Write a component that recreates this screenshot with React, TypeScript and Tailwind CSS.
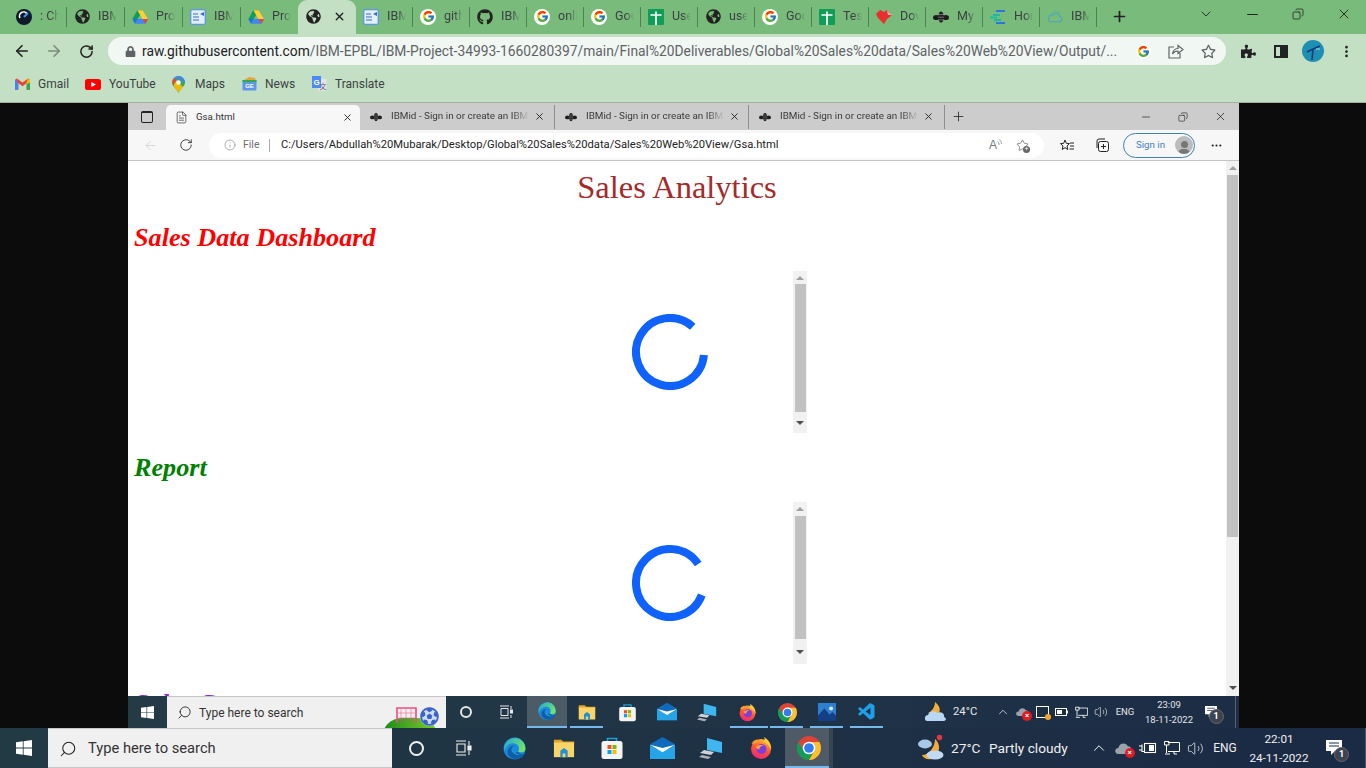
import React from "react";
import { FcGoogle } from "react-icons/fc";
import { FaFutbol, FaGithub, FaGlobeAmericas, FaLock, FaPuzzlePiece, FaRegStar } from "react-icons/fa";
import { VscVscode } from "react-icons/vsc";
import { ArrowLeft, ArrowRight, RotateCw, X, Plus, ChevronDown, Minus, Copy, Info, EllipsisVertical, Ellipsis, ChevronUp, Search, Volume2, FileText, Star } from "lucide-react";

type P = { s?: number };

const Win = ({ s = 18 }: P) => (
  <svg width={s} height={s} viewBox="0 0 16 16" fill="#fff">
    <path d="M0 2.3 6.8 1.3V7.6H0ZM7.6 1.2 16 0V7.6H7.6ZM0 8.4H6.8V14.7L0 13.7ZM7.6 8.4H16V16L7.6 14.8Z" />
  </svg>
);
const Chrome = ({ s = 20 }: P) => (
  <svg width={s} height={s} viewBox="4 4 40 40">
    <circle cx="24" cy="24" r="20" fill="#db4437" />
    <path d="M6.68 14 15.34 29H32.66L24 44A20 20 0 0 1 6.68 14Z" fill="#0f9d58" />
    <path d="M41.32 14H24L32.66 29 24 44A20 20 0 0 0 41.32 14Z" fill="#fbc02d" />
    <circle cx="24" cy="24" r="10.5" fill="#fff" />
    <circle cx="24" cy="24" r="8" fill="#2f7df0" />
  </svg>
);
const Edge = ({ s = 24 }: P) => (
  <svg width={s} height={s} viewBox="0 0 48 48">
    <defs>
      <linearGradient id="eg" x1="0" y1="0" x2="1" y2="0.6"><stop offset="0" stopColor="#1ea8d8" /><stop offset="1" stopColor="#72e26c" /></linearGradient>
    </defs>
    <circle cx="24" cy="24" r="21" fill="#1a8ae0" />
    <path d="M27 3.2A21 21 0 0 1 45 25C45 31 37 33 31 30 35 24 32 15 23 14 15 13 8 18 4 28 3 13 14 3 27 3.2Z" fill="url(#eg)" />
    <path d="M31 30C26 33 17 33 18 25 19 21 22 19 25 19 15 18 9 26 11 34 14 42 24 47 34 43 39 41 43 37 44 32 40 37 35 35 31 30Z" fill="#0f5ea8" />
    <path d="M19 28C21 33 27 37 36 37 30 35 24 33 19 28Z" fill="#33b6e8" />
  </svg>
);
const Folder = ({ s = 22 }: P) => (
  <svg width={s} height={s} viewBox="0 0 24 24">
    <path d="M1 3H9L11 5H23V8H1Z" fill="#e0a526" />
    <path d="M1 6H23V22H1Z" fill="#f8d469" />
    <path d="M8 15 12 12 16 15V22H8Z" fill="#1f8fd8" />
    <path d="M10.5 18H13.5V22H10.5Z" fill="#f8d469" />
  </svg>
);
const Store = ({ s = 24 }: P) => (
  <svg width={s} height={s} viewBox="0 0 24 24">
    <path d="M7.5 6V2.5H16.5V6" fill="none" stroke="#18a0d8" strokeWidth="1.6" />
    <rect x="1.5" y="5" width="21" height="18" rx="2.5" fill="#f4f4f4" />
    <rect x="7.5" y="9" width="4" height="4" fill="#f25022" />
    <rect x="12.5" y="9" width="4" height="4" fill="#7fba00" />
    <rect x="7.5" y="14" width="4" height="4" fill="#00a4ef" />
    <rect x="12.5" y="14" width="4" height="4" fill="#ffb900" />
  </svg>
);
const Mail = ({ s = 24 }: P) => (
  <svg width={s} height={s} viewBox="0 0 24 24">
    <path d="M0 8 12 1 24 8V22H0Z" fill="#0f6cbd" />
    <path d="M0 9 12 15 24 9V22H0Z" fill="#25a5e8" />
    <path d="M0 8.5 12 15.5 24 8.5 12 11.5Z" fill="#fff" />
  </svg>
);
const Device = ({ s = 24 }: P) => (
  <svg width={s} height={s} viewBox="0 0 24 24">
    <path d="M8 2 23 6V17L8 14Z" fill="#3fb6ee" />
    <path d="M5 14 15 16 12 19 1 17Z" fill="#cfd3d6" />
    <path d="M3 19 12 21 9 23 0 21Z" fill="#aeb2b5" />
  </svg>
);
const Firefox = ({ s = 24 }: P) => (
  <svg width={s} height={s} viewBox="0 0 48 48">
    <defs>
      <linearGradient id="ffg" x1="0.7" y1="0" x2="0.3" y2="1"><stop offset="0" stopColor="#ffbd2e" /><stop offset="0.5" stopColor="#ff5634" /><stop offset="1" stopColor="#f0247a" /></linearGradient>
    </defs>
    <circle cx="24" cy="26" r="20" fill="url(#ffg)" />
    <path d="M30 2C40 8 46 18 44 28 42 20 36 14 28 12 32 9 32 6 30 2Z" fill="#ffc83a" />
    <path d="M5 16C8 9 13 7 17 7 15 10 16 12 18 13 13 14 8 16 5 16Z" fill="#ff9a2e" />
    <circle cx="25" cy="26" r="10" fill="#7b3fe0" />
    <path d="M14 22C18 18 24 17 30 19 24 19 20 23 21 27 17 27 15 25 14 22Z" fill="#ffa436" />
  </svg>
);
const Photos = ({ s = 20 }: P) => (
  <svg width={s} height={s} viewBox="0 0 20 20">
    <rect width="20" height="20" fill="#2f7fd0" />
    <circle cx="14.5" cy="6" r="2.2" fill="#d9ecff" />
    <path d="M0 14 7 6 13 13 16 10 20 14V20H0Z" fill="#143f86" />
  </svg>
);
const Drive = ({ s = 16 }: P) => (
  <svg width={s} height={s} viewBox="0 0 24 22">
    <path d="M8 1H16L8.5 14H0.5Z" fill="#0f9d58" />
    <path d="M8 1H16L24 14.5H16Z" fill="#ffcf33" />
    <path d="M4.5 21 8.5 14H24L20 21Z" fill="#4285f4" />
    <path d="M0.5 14H8.5L4.5 21Z" fill="#1a73e8" />
    <path d="M16 14.5H24L20 21Z" fill="#ea4335" />
  </svg>
);
const Docs = ({ s = 16 }: P) => (
  <svg width={s} height={s} viewBox="0 0 16 16">
    <rect x="0.7" y="0.7" width="14.6" height="14.6" rx="1.5" fill="#e4effc" stroke="#5a96e6" strokeWidth="1.3" />
    <path d="M3 5H8M3 8H9M3 11H9" stroke="#2e6fce" strokeWidth="1.2" />
    <path d="M10 5 14 3V7Z" fill="#2e6fce" />
  </svg>
);
const G = () => (
  <span className="w-[16px] h-[16px] rounded-full bg-white flex items-center justify-center"><FcGoogle size={13} /></span>
);
const Sheets = ({ s = 16 }: P) => (
  <svg width={s} height={s} viewBox="0 0 16 16">
    <rect width="16" height="16" rx="1" fill="#0f9d58" />
    <path d="M2.5 6H13.5M8 2.5V16" stroke="#fff" strokeWidth="1.7" />
  </svg>
);
const Heart = ({ s = 16 }: P) => (
  <svg width={s} height={s} viewBox="0 0 16 16">
    <path d="M0 5 4 1 8 3 11 1 13 4 16 6 11 10 8 15 2 9Z" fill="#e8312f" />
    <path d="M11 1 13 4 16 6 12 6Z" fill="#f5b8b8" />
  </svg>
);
const Bee = ({ s = 16 }: P) => (
  <svg width={s} height={s} viewBox="0 0 16 12" fill="#1e1e1e">
    <ellipse cx="8" cy="6" rx="2.8" ry="5.5" />
    <ellipse cx="3.2" cy="6.5" rx="3.2" ry="2.6" />
    <ellipse cx="12.8" cy="6.5" rx="3.2" ry="2.6" />
    <path d="M5 3.5H11M5 6.2H11M5 8.9H11" stroke="#9a9a9a" strokeWidth="0.7" />
  </svg>
);
const Lines = ({ s = 16 }: P) => (
  <svg width={s} height={s} viewBox="0 0 16 14">
    <path d="M6 1H15" stroke="#2d74e0" strokeWidth="2" />
    <path d="M3 5H10" stroke="#1fb6b0" strokeWidth="2" />
    <path d="M0 7.5H7" stroke="#16c0a0" strokeWidth="2" />
    <path d="M4 10H11" stroke="#1fb6b0" strokeWidth="2" />
    <path d="M6 13H15" stroke="#2d74e0" strokeWidth="2" />
  </svg>
);
const Cloud = ({ s = 17 }: P) => (
  <svg width={s} height={s} viewBox="0 0 24 24" fill="none" stroke="#4aa6c4" strokeWidth="1.6">
    <path d="M6 20H18C23 20 24 13 19 12 19 6 11 5 9 10 4 9 2 12 3 15 1 17 3 20 6 20Z" />
    <path d="M7 5 8 7M12 3V5M17 5 16 7M3 9 5 10" stroke="#46b7a8" />
  </svg>
);
const MiniLogo = ({ s = 16 }: P) => (
  <svg width={s} height={s} viewBox="0 0 16 16">
    <circle cx="8" cy="8" r="8" fill="#10182b" />
    <path d="M4 9A4 4 0 0 1 11 5" fill="none" stroke="#fff" strokeWidth="1.6" />
    <path d="M8 8 12 4" stroke="#2e9cf0" strokeWidth="2" />
  </svg>
);
const Gmail = () => (
  <svg width="15" height="12" viewBox="0 0 16 12">
    <path d="M0 1.5V12H3.5V5L8 8.5 12.5 5V12H16V1.5L14 0 8 4.5 2 0Z" fill="#ea4335" />
    <path d="M0 1.5V12H3.5V4Z" fill="#4285f4" />
    <path d="M16 1.5V12H12.5V4Z" fill="#34a853" />
    <path d="M12.5 3.5 14 0 16 1.5V4L12.5 6.2Z" fill="#fbbc04" />
  </svg>
);
const YouTube = () => (
  <svg width="16" height="11" viewBox="0 0 16 11">
    <rect width="16" height="11" rx="2.6" fill="#f00" />
    <path d="M6.3 3 11 5.5 6.3 8Z" fill="#fff" />
  </svg>
);
const Maps = () => (
  <svg width="13" height="17" viewBox="0 0 13 17">
    <path d="M6.5 0A6.5 6.5 0 0 1 13 6.5C13 10 9 12 6.5 17 4 12 0 10 0 6.5A6.5 6.5 0 0 1 6.5 0Z" fill="#34a853" />
    <path d="M2 2 11 11C9.5 13 7.5 14.5 6.5 17 5 14 3.5 12.5 2 11Z" fill="#fbbc04" opacity="0.95" />
    <path d="M6.5 0A6.5 6.5 0 0 1 13 6.5L10 6A3.5 3.5 0 0 0 4 4L2 2A6.5 6.5 0 0 1 6.5 0Z" fill="#4285f4" />
    <path d="M2 2 4.5 4.5 1.5 9A6 6 0 0 1 2 2Z" fill="#ea4335" />
    <circle cx="6.5" cy="6.5" r="2.3" fill="#fff" />
  </svg>
);
const News = () => (
  <svg width="15" height="14" viewBox="0 0 15 14">
    <path d="M2 3 7 0 13 1 14 4H2Z" fill="#e8a33d" />
    <rect x="0.5" y="3" width="14" height="10.5" rx="1" fill="#5c97ea" />
    <path d="M0.5 3H14.5V5H0.5Z" fill="#34a853" />
    <text x="7.5" y="11" fontSize="6" fill="#fff" textAnchor="middle" fontFamily="Liberation Sans" fontWeight="700">GE</text>
  </svg>
);
const Translate = () => (
  <svg width="15" height="16" viewBox="0 0 15 16">
    <path d="M6 3H14.5V15H6Z" fill="#e3e5e8" />
    <path d="M0 0H9V12H0Z" fill="#4c8bf5" />
    <text x="4.5" y="9" fontSize="8" fill="#fff" textAnchor="middle" fontFamily="Liberation Sans" fontWeight="700">G</text>
    <text x="11" y="13" fontSize="7" fill="#5f6368" textAnchor="middle" fontFamily="Noto Sans CJK SC">文</text>
  </svg>
);
const Spinner = ({ d }: { d: string }) => (
  <svg width="76" height="76" viewBox="0 0 76 76" fill="none" className="shrink-0">
    <path d={d} stroke="#0f62fe" strokeWidth="8" />
  </svg>
);
const TriUp = () => <span className="w-0 h-0 border-x-[4px] border-x-transparent border-b-[4px] border-b-[#a0a0a0]" />;
const TriDown = () => <span className="w-0 h-0 border-x-[4px] border-x-transparent border-t-[4px] border-t-[#505050]" />;

const MoonCloud = () => (
  <svg width="26" height="28" viewBox="0 0 26 28">
    <path d="M17 5C23 10 23 20 13 25 9 26 5 24 4 21 11 21 17 13 17 5Z" fill="#f3a93c" />
    <ellipse cx="7" cy="10" rx="7" ry="4.4" fill="#a9c7e6" />
    <ellipse cx="17" cy="21" rx="8.5" ry="4.6" fill="#c3dbf2" />
    <circle cx="21.5" cy="3.5" r="2.7" fill="#e5383b" />
  </svg>
);
const SmallMoonCloud = () => (
  <svg width="22" height="20" viewBox="0 0 22 20">
    <path d="M10 0C14 3 16 7 14 11H3C7 9 10 5 10 0Z" fill="#f0b040" />
    <path d="M2 19C-1 19 -1 13 3 13 4 9 10 8 12 11 16 9 20 12 19 15 22 16 21 19 19 19Z" fill="#b9d6f2" />
  </svg>
);
const OneDrive = ({ s = 18 }: P) => (
  <span className="relative inline-flex">
    <svg width={s} height={s * 0.7} viewBox="0 0 20 14"><path d="M4 14C-1 14-1 7 4 7 5 1 13 0 15 5 19 5 20 8 19 14Z" fill="#9aa3a8" /></svg>
    <span className="absolute right-[-3px] bottom-[-4px] w-[10px] h-[10px] rounded-full bg-[#e01b24] text-white text-[8px] leading-[10px] text-center font-bold">×</span>
  </span>
);
const Battery = () => (
  <svg width="18" height="12" viewBox="0 0 18 12" fill="none" stroke="#fff" strokeWidth="1.1">
    <rect x="5.5" y="1.5" width="11" height="9" />
    <rect x="10" y="3" width="5" height="6" fill="#fff" stroke="none" />
    <path d="M0 4H3M0 8H3M3 2.5V9.5H5.5" />
  </svg>
);
const SmallBattery = () => (
  <svg width="14" height="10" viewBox="0 0 14 10" fill="none" stroke="#fff" strokeWidth="1">
    <rect x="0.5" y="1.5" width="11" height="7" />
    <rect x="2" y="3" width="5" height="4" fill="#fff" stroke="none" />
    <path d="M12.5 3.5V6.5" />
  </svg>
);
const Net = ({ s = 16 }: P) => (
  <svg width={s} height={s} viewBox="0 0 16 16" fill="none" stroke="#fff" strokeWidth="1">
    <path d="M4 2.5H15.5V11.5H4M0.5 1.5H5V5H0.5ZM2.5 5V13M1 14H6M10 11.5V14H13" />
  </svg>
);
const Bubble = ({ s = 16 }: P) => (
  <span className="relative inline-flex">
    <svg width={s} height={s} viewBox="0 0 16 16" fill="#fff"><path d="M0 0H16V11H9L5 15V11H0Z" /><path d="M3 3H13M3 6H13" stroke="#1d2c44" strokeWidth="1" /></svg>
    <span className="absolute right-[-7px] bottom-[-6px] w-[15px] h-[15px] rounded-full bg-[#3d4450] border border-[#666] text-white text-[9px] leading-[13px] text-center font-bold">1</span>
  </span>
);
const ShareIcon = () => (
  <svg width="16" height="16" viewBox="0 0 16 16" fill="none" stroke="#5f6368" strokeWidth="1.2">
    <path d="M6 4H1V15H12V10" />
    <path d="M4.5 11C5 7 8 5.5 10 5.5V2.5L15 6.5 10 10.5V8C8 8 5.8 8.8 4.5 11Z" fill="#f1f7f2" />
  </svg>
);
const Tab = ({ icon, label, className }: { icon: React.ReactNode; label: string; className: string }) => (
  <div className={`h-[20px] flex items-center shrink-0 pl-[7px] border-r border-[#4f8253] ${className}`}>
    <span className="w-[16px] h-[16px] flex items-center justify-center shrink-0">{icon}</span>
    <span className="ml-[8px] w-[19px] overflow-hidden whitespace-nowrap text-[12.5px] text-[#3c4043] [mask-image:linear-gradient(to_right,black_55%,transparent)]">{label}</span>
  </div>
);
const EdgeTab = ({ className }: { className: string }) => (
  <div className={`h-[24px] flex items-center shrink-0 ${className}`}>
    <span className="w-[16px] flex justify-center ml-[8px] shrink-0"><Bee s={12} /></span>
    <span className="ml-[7px] w-[138px] overflow-hidden whitespace-nowrap text-[9.9px] text-[#3a3a3a] [mask-image:linear-gradient(to_right,black_88%,transparent)]">IBMid - Sign in or create an IBMid</span>
    <X size={11} strokeWidth={2} color="#222" className="ml-[5px] shrink-0" />
  </div>
);
const Mark = ({ children, className }: { children: React.ReactNode; className: string }) => (
  <div className={`flex items-center gap-[8px] text-[12px] text-[#3c4043] ${className}`}>{children}</div>
);

export default function App() {
  return (
    <div className="w-[1366px] h-[768px] overflow-hidden flex flex-col font-['Roboto',sans-serif] bg-[#0c0c0c]">
      {/* Outer Chrome tab strip */}
      <div className="h-[34px] bg-[#78bb7b] flex items-start shrink-0">
        <div className="w-[9px] shrink-0" />
        <div className="flex items-center h-[33px]">
          <Tab icon={<MiniLogo />} label=": Chat" className="w-[58px]" />
          <Tab icon={<FaGlobeAmericas size={15} color="#222" />} label="IBM" className="w-[58px]" />
          <Tab icon={<Drive />} label="Project" className="w-[58px]" />
          <Tab icon={<Docs />} label="IBM" className="w-[58px]" />
          <Tab icon={<Drive />} label="Project" className="w-[57px] border-r-0" />
        </div>
        <div className="w-[58px] h-[34px] bg-[#c4e0c4] rounded-t-[9px] flex items-center shrink-0 pl-[8px] pb-[2px]">
          <FaGlobeAmericas size={15} color="#222" />
          <X size={13} strokeWidth={2.6} color="#222" className="ml-[12px]" />
        </div>
        <div className="flex items-center h-[33px]">
          <Tab icon={<Docs />} label="IBM" className="w-[57px]" />
          <Tab icon={<G />} label="github" className="w-[57px]" />
          <Tab icon={<FaGithub size={16} color="#222" />} label="IBM" className="w-[57px]" />
          <Tab icon={<G />} label="online" className="w-[57px]" />
          <Tab icon={<G />} label="Google" className="w-[57px]" />
          <Tab icon={<Sheets />} label="User" className="w-[57px]" />
          <Tab icon={<FaGlobeAmericas size={15} color="#222" />} label="user" className="w-[57px]" />
          <Tab icon={<G />} label="Google" className="w-[57px]" />
          <Tab icon={<Sheets />} label="Test" className="w-[57px]" />
          <Tab icon={<Heart />} label="Down" className="w-[57px]" />
          <Tab icon={<Bee />} label="My" className="w-[57px]" />
          <Tab icon={<Lines />} label="Home" className="w-[57px]" />
          <Tab icon={<Cloud />} label="IBM" className="w-[57px]" />
        </div>
        <div className="w-[45px] h-[33px] flex items-center justify-center shrink-0"><Plus size={17} strokeWidth={2.4} color="#222" /></div>
        <div className="w-[72px] h-[28px] flex items-center justify-end shrink-0"><ChevronDown size={16} strokeWidth={1.3} color="#222" /></div>
        <div className="w-[47px] h-[28px] flex items-center justify-end shrink-0"><Minus size={17} strokeWidth={1.4} color="#222" /></div>
        <div className="w-[43px] h-[28px] flex items-center justify-end shrink-0"><Copy size={12} strokeWidth={1.5} color="#222" className="-scale-x-100" /></div>
        <div className="w-[48px] h-[28px] flex items-center justify-end shrink-0"><X size={16} strokeWidth={1.4} color="#222" /></div>
      </div>

      {/* Outer toolbar */}
      <div className="h-[34px] bg-[#c4e0c4] flex items-center shrink-0">
        <div className="w-[44px] flex justify-center shrink-0"><ArrowLeft size={18} strokeWidth={2.2} color="#222" /></div>
        <div className="w-[20px] flex justify-center shrink-0"><ArrowRight size={18} strokeWidth={2.2} color="#7c8a7e" /></div>
        <div className="w-[44px] flex justify-center shrink-0"><RotateCw size={15} strokeWidth={2.4} color="#222" /></div>
        <div className="w-[1118px] h-[28px] rounded-full bg-[#f1f7f2] flex items-center shrink-0">
          <div className="w-[34px] flex justify-end pr-[6px] shrink-0"><FaLock size={11} color="#5f6368" /></div>
          <div className="w-[977px] shrink-0 whitespace-nowrap overflow-hidden text-[13.8px] text-[#5f6368]"><span className="text-[#202124]">raw.githubusercontent.com</span>/IBM-EPBL/IBM-Project-34993-1660280397/main/Final%20Deliverables/Global%20Sales%20data/Sales%20Web%20View/Output/...</div>
          <div className="w-[32px] flex justify-end shrink-0"><span className="w-[15px] h-[15px] rounded-full bg-white flex items-center justify-center"><FcGoogle size={13} /></span></div>
          <div className="w-[33px] flex justify-end shrink-0"><ShareIcon /></div>
          <div className="w-[32px] flex justify-end shrink-0"><FaRegStar size={15} color="#5f6368" /></div>
        </div>
        <div className="w-[30px] flex justify-end shrink-0"><FaPuzzlePiece size={15} color="#222" /></div>
        <div className="w-[32px] flex justify-end shrink-0">
          <span className="w-[14px] h-[13px] border-2 border-[#222] flex justify-end"><span className="w-[6px] bg-[#222]" /></span>
        </div>
        <div className="w-[36px] flex justify-end shrink-0">
          <svg width="22" height="22" viewBox="0 0 22 22">
            <circle cx="11" cy="11" r="11" fill="#1c8fb2" />
            <path d="M11 9 5 12M11 9 18 6M11 9 10 20" stroke="#123a78" strokeWidth="1.6" />
            <path d="M14 9H18" stroke="#a8d8e8" strokeWidth="1" />
          </svg>
        </div>
        <div className="w-[44px] flex justify-center shrink-0"><EllipsisVertical size={15} strokeWidth={2.4} color="#222" /></div>
      </div>

      {/* Bookmarks */}
      <div className="h-[35px] bg-[#c4e0c4] border-b border-[#9fb1a0] flex items-center shrink-0 pl-[15px] pb-[2px]">
        <Mark className="w-[70px]"><Gmail /><span>Gmail</span></Mark>
        <Mark className="w-[87px]"><YouTube /><span>YouTube</span></Mark>
        <Mark className="w-[70px]"><Maps /><span className="ml-[2px]">Maps</span></Mark>
        <Mark className="w-[70px]"><News /><span>News</span></Mark>
        <Mark className="w-[80px]"><Translate /><span>Translate</span></Mark>
      </div>

      {/* Black desktop holding the inner window */}
      <div className="h-[625px] shrink-0 bg-[#0c0c0c] pl-[128px] flex">
        <div className="w-[1111px] flex flex-col">
          {/* Edge tab strip */}
          <div className="h-[27px] bg-[#cccccc] flex items-end shrink-0">
            <div className="w-[38px] h-[27px] flex items-center justify-center shrink-0">
              <span className="w-[12px] h-[12px] border border-[#222] border-t-2 rounded-[2px]" />
            </div>
            <div className="w-[194px] h-[25px] bg-[#f7f7f7] rounded-t-[5px] flex items-center shrink-0">
              <span className="w-[16px] ml-[7px] flex justify-center shrink-0"><FileText size={13} strokeWidth={1.2} color="#222" /></span>
              <span className="ml-[7px] w-[146px] text-[9.7px] text-[#333]">Gsa.html</span>
              <X size={11} strokeWidth={2} color="#222" />
            </div>
            <div className="flex items-center h-[27px]">
              <EdgeTab className="w-[195px] border-r border-[#8e8e8e] h-[17px]" />
              <EdgeTab className="w-[194px] border-r border-[#8e8e8e] h-[17px]" />
              <EdgeTab className="w-[196px] border-r border-[#8e8e8e] h-[17px]" />
              <div className="w-[27px] flex justify-center"><Plus size={15} strokeWidth={1.3} color="#222" /></div>
            </div>
            <div className="w-[180px] h-[27px] flex items-center justify-end shrink-0"><Minus size={12} strokeWidth={1.4} color="#222" /></div>
            <div className="w-[36px] h-[27px] flex items-center justify-end shrink-0"><Copy size={10} strokeWidth={1.5} color="#222" className="-scale-x-100" /></div>
            <div className="w-[39px] h-[27px] flex items-center justify-end shrink-0"><X size={13} strokeWidth={1.4} color="#222" /></div>
          </div>

          {/* Edge toolbar */}
          <div className="h-[31px] bg-[#f7f7f7] border-b border-[#c4c4c4] flex items-center shrink-0">
            <div className="w-[44px] flex justify-center shrink-0"><ArrowLeft size={15} strokeWidth={1.1} color="#c8c8c8" /></div>
            <div className="w-[28px] flex justify-center shrink-0"><RotateCw size={14} strokeWidth={1.4} color="#222" /></div>
            <div className="ml-[9px] w-[835px] h-[25px] bg-white rounded-full flex items-center shrink-0">
              <div className="ml-[15px] w-[12px] shrink-0"><Info size={12} strokeWidth={1.1} color="#6f6f6f" /></div>
              <span className="ml-[7px] text-[10.5px] text-[#6f6f6f] w-[21px]">File</span>
              <span className="w-px h-[13px] bg-[#aaa] ml-[5px]" />
              <span className="ml-[11px] w-[644px] shrink-0 whitespace-nowrap text-[11.2px] text-[#222]">C:/Users/Abdullah%20Mubarak/Desktop/Global%20Sales%20data/Sales%20Web%20View/Gsa.html</span>
              <span className="w-[77px] flex justify-end items-center shrink-0">
                <span className="text-[12px] text-[#777] font-['Liberation_Sans']">A</span>
                <svg width="5" height="8" viewBox="0 0 5 8" fill="none" stroke="#888" strokeWidth="0.8" className="mb-[4px]"><path d="M0.5 2.5A3 3 0 0 1 2 6M2.5 0.5A6 6 0 0 1 4.5 5" /></svg>
              </span>
              <span className="w-[28px] flex justify-end shrink-0 relative">
                <Star size={13} strokeWidth={1.1} color="#444" className="mr-[1px]" />
                <span className="absolute right-[0px] bottom-[-1px] w-[7px] h-[7px] rounded-full bg-[#666] text-white text-[7px] leading-[6px] text-center">+</span>
              </span>
            </div>
            <div className="w-[30px] flex justify-end shrink-0">
              <svg width="14" height="13" viewBox="0 0 14 13" fill="none" stroke="#222" strokeWidth="1"><path d="M5 1 6.3 4.3 9.5 4.6 7 7 7.8 10.5 5 8.7 2.2 10.5 3 7 0.5 4.6 3.7 4.3ZM10 4H14M10 7H14M9.5 10H14" /></svg>
            </div>
            <div className="w-[35px] flex justify-end shrink-0">
              <svg width="14" height="14" viewBox="0 0 14 14" fill="none" stroke="#222" strokeWidth="1"><path d="M2 10V3A2 2 0 0 1 4 1H10" /><rect x="3.5" y="3.5" width="10" height="10" rx="2" /><path d="M8.5 6V11M6 8.5H11" /></svg>
            </div>
            <div className="ml-[14px] w-[72px] h-[25px] rounded-full border border-[#3f7fc4] flex items-center shrink-0 pl-[12px]">
              <span className="text-[9.7px] text-[#3f7fc4] w-[36px]">Sign in</span>
              <span className="w-[18px] h-[18px] ml-[3px] rounded-full bg-[#bcbcbc] flex flex-col items-center justify-end overflow-hidden">
                <span className="w-[7px] h-[7px] rounded-full bg-[#777] mb-[1px]" />
                <span className="w-[12px] h-[5px] rounded-t-full bg-[#777]" />
              </span>
            </div>
            <div className="w-[21px] ml-[11px] flex justify-center shrink-0"><Ellipsis size={13} strokeWidth={2} color="#222" /></div>
          </div>

          {/* Page */}
          <div className="h-[535px] flex shrink-0 overflow-hidden">
            <div className="w-[1098px] bg-white overflow-hidden shrink-0 font-['Liberation_Serif',serif]">
              <h1 className="mt-[8px] h-[36px] leading-[36px] text-center text-[32.5px] text-[#a52a2a]">Sales Analytics</h1>
              <h2 className="mt-[18px] ml-[6px] h-[30px] leading-[30px] text-[26.2px] font-bold italic text-[#ff0000]">Sales Data Dashboard</h2>
              <div className="mt-[18px] ml-[6px] w-[673px] h-[162px] flex justify-between items-start">
                <div className="ml-[498px] mt-[43px]"><Spinner d="M71.9 41A34 34 0 1 1 60.8 12.7" /></div>
                <div className="w-[14px] h-[162px] bg-[#f1f1f1] flex flex-col items-center shrink-0">
                  <div className="h-[13px] flex items-center justify-center"><TriUp /></div>
                  <div className="w-[11px] h-[128px] bg-[#c1c1c1]" />
                  <div className="flex-1 flex items-center justify-center"><TriDown /></div>
                </div>
              </div>
              <h2 className="mt-[20px] ml-[6px] h-[30px] leading-[30px] text-[26.2px] font-bold italic text-[#008000]">Report</h2>
              <div className="mt-[19px] ml-[6px] w-[673px] h-[162px] flex justify-between items-start">
                <div className="ml-[498px] mt-[43px]"><Spinner d="M69.8 50A34 34 0 1 1 66.2 19" /></div>
                <div className="w-[14px] h-[162px] bg-[#f1f1f1] flex flex-col items-center shrink-0">
                  <div className="h-[14px] flex items-center justify-center"><TriUp /></div>
                  <div className="w-[11px] h-[123px] bg-[#c1c1c1]" />
                  <div className="flex-1 flex items-center justify-center"><TriDown /></div>
                </div>
              </div>
              <h2 className="mt-[25px] ml-[6px] h-[30px] leading-[30px] text-[26.2px] font-bold italic text-[#8a2be2]">Sales Count</h2>
            </div>
            <div className="w-[13px] bg-[#f1f1f1] flex flex-col items-center shrink-0">
              <div className="h-[14px] flex items-center justify-center"><TriUp /></div>
              <div className="w-[11px] h-[362px] bg-[#c1c1c1]" />
              <div className="flex-1 flex items-end justify-center pb-[6px]"><TriDown /></div>
            </div>
          </div>

          {/* Inner taskbar */}
          <div className="h-[32px] flex items-stretch shrink-0 bg-gradient-to-r from-[#243b46] to-[#1c2d46] text-white">
            <div className="w-[39px] flex items-center justify-center shrink-0"><Win s={13} /></div>
            <div className="w-[279px] bg-[#f0f0f0] border-t border-[#c8c8c8] flex items-center shrink-0 relative overflow-hidden">
              <Search size={15} strokeWidth={1.4} color="#222" className="ml-[10px] -scale-x-100" />
              <span className="ml-[7px] text-[12px] text-[#333]">Type here to search</span>
              <span className="absolute left-[215px] top-[21px] w-[56px] h-[40px] rounded-full bg-gradient-to-r from-[#0c8a1c] to-[#7ad12a]" />
              <svg width="21" height="16" viewBox="0 0 21 16" fill="none" stroke="#ee4b82" className="absolute left-[229px] top-[10px]">
                <path d="M1 16V1H20V16" strokeWidth="1.6" />
                <path d="M5 2V16M10 2V16M15 2V16M2 6H19M2 11H19" strokeWidth="0.5" />
              </svg>
              <span className="absolute left-[253px] top-[10px] w-[19px] h-[19px] rounded-full bg-[#cfdcf5] flex items-center justify-center"><FaFutbol size={19} color="#3b63c9" /></span>
            </div>
            <div className="w-[40px] flex items-center justify-center shrink-0"><span className="w-[12px] h-[12px] rounded-full border-2 border-[#e6e6e6]" /></div>
            <div className="w-[41px] flex items-center justify-center shrink-0">
              <svg width="14" height="14" viewBox="0 0 14 14" fill="none" stroke="#e6e6e6" strokeWidth="1"><path d="M0 1H9M0 13H9M1 3.5H8V10.5H1ZM11 1V4M11 10V13" /><rect x="10.5" y="5" width="2" height="3" fill="#e6e6e6" /></svg>
            </div>
            <div className="w-[40px] bg-[#4b5c66] border-b-2 border-[#76b9ed] flex items-center justify-center shrink-0"><Edge s={20} /></div>
            <div className="w-[40px] flex items-center justify-center shrink-0 relative"><Folder s={18} /><span className="absolute bottom-0 left-[3px] w-[33px] h-[2px] bg-[#76b9ed]" /></div>
            <div className="w-[40px] flex items-center justify-center shrink-0"><Store s={19} /></div>
            <div className="w-[40px] flex items-center justify-center shrink-0"><Mail s={20} /></div>
            <div className="w-[40px] flex items-center justify-center shrink-0"><Device s={20} /></div>
            <div className="w-[40px] flex items-center justify-center shrink-0 relative"><Firefox s={19} /><span className="absolute bottom-0 left-[3px] w-[38px] h-[2px] bg-[#76b9ed]" /></div>
            <div className="w-[40px] flex items-center justify-center shrink-0 relative"><Chrome s={19} /><span className="absolute bottom-0 left-[3px] w-[33px] h-[2px] bg-[#76b9ed]" /></div>
            <div className="w-[40px] flex items-center justify-center shrink-0 relative"><Photos s={18} /><span className="absolute bottom-0 left-[3px] w-[33px] h-[2px] bg-[#76b9ed]" /></div>
            <div className="w-[40px] flex items-center justify-center shrink-0 relative"><VscVscode size={20} color="#1e9fe8" /><span className="absolute bottom-0 left-[3px] w-[33px] h-[2px] bg-[#76b9ed]" /></div>
            <div className="w-[38px] shrink-0" />
            <div className="w-[22px] flex items-center justify-center shrink-0"><SmallMoonCloud /></div>
            <div className="w-[46px] flex items-center pl-[6px] text-[11.3px] text-[#e6e6e6] shrink-0">24°C</div>
            <div className="w-[20px] flex items-center justify-center shrink-0"><ChevronUp size={14} strokeWidth={1.2} /></div>
            <div className="w-[19px] flex items-center justify-center shrink-0"><OneDrive s={13} /></div>
            <div className="w-[20px] flex items-center justify-center shrink-0">
              <span className="relative w-[13px] h-[12px] border border-white"><span className="absolute right-[-3px] bottom-[-3px] w-[6px] h-[6px] rounded-full bg-[#f5a524]" /></span>
            </div>
            <div className="w-[20px] flex items-center justify-center shrink-0"><SmallBattery /></div>
            <div className="w-[19px] flex items-center justify-center shrink-0"><Net s={13} /></div>
            <div className="w-[20px] flex items-center justify-center shrink-0"><Volume2 size={14} strokeWidth={1} /></div>
            <div className="w-[28px] flex items-center justify-center text-[9.5px] text-[#e6e6e6] shrink-0">ENG</div>
            <div className="w-[60px] flex flex-col items-center justify-center text-[9.5px] leading-[15px] text-[#e6e6e6] shrink-0"><span>23:09</span><span>18-11-2022</span></div>
            <div className="w-[23px] flex items-center justify-center shrink-0"><Bubble s={12} /></div>
            <div className="w-[14px] flex items-stretch justify-end shrink-0"><span className="w-px bg-[#54636d]" /></div>
          </div>
        </div>
      </div>

      {/* Outer taskbar */}
      <div className="h-[40px] shrink-0 flex items-stretch bg-gradient-to-r from-[#223a44] to-[#1b2a45] text-white">
        <div className="w-[48px] flex items-center justify-center shrink-0"><Win s={16} /></div>
        <div className="w-[344px] bg-[#f0f0f0] border-y border-[#c6c6c6] flex items-center shrink-0 pt-[1px]">
          <Search size={18} strokeWidth={1.4} color="#222" className="ml-[11px] -scale-x-100" />
          <span className="ml-[11px] text-[14.7px] text-[#333]">Type here to search</span>
        </div>
        <div className="w-[48px] flex items-center justify-center shrink-0"><span className="w-[15px] h-[15px] rounded-full border-2 border-[#f0f0f0]" /></div>
        <div className="w-[47px] flex items-center justify-center shrink-0">
          <svg width="16" height="16" viewBox="0 0 16 16" fill="none" stroke="#f0f0f0" strokeWidth="1.1"><path d="M0 1H10M0 15H10M1 4H9V12H1ZM13 1V5M13 11V15" /><rect x="12" y="6" width="3" height="4" fill="#f0f0f0" /></svg>
        </div>
        <div className="w-[55px] flex items-center justify-center shrink-0"><Edge s={25} /></div>
        <div className="w-[44px] flex items-center justify-center shrink-0"><Folder s={22} /></div>
        <div className="w-[52px] flex items-center justify-center shrink-0"><Store s={24} /></div>
        <div className="w-[48px] flex items-center justify-center shrink-0"><Mail s={25} /></div>
        <div className="w-[50px] flex items-center justify-center shrink-0"><Device s={24} /></div>
        <div className="w-[49px] flex items-center justify-center shrink-0"><Firefox s={24} /></div>
        <div className="w-[48px] bg-[linear-gradient(to_right,#4e5b66_44px,#36454f_44px)] relative flex items-center justify-center shrink-0"><Chrome s={24} /><span className="absolute bottom-0 left-0 w-[44px] h-[2px] bg-[#76b9ed]" /></div>
        <div className="w-[84px] shrink-0" />
        <div className="w-[28px] flex items-center justify-center shrink-0"><MoonCloud /></div>
        <div className="w-[44px] flex items-center pl-[6px] text-[13.7px] text-[#f0f0f0] shrink-0">27°C</div>
        <div className="w-[98px] flex items-center text-[13.7px] text-[#f0f0f0] whitespace-nowrap shrink-0">Partly cloudy</div>
        <div className="w-[24px] flex items-center justify-center shrink-0"><ChevronUp size={18} strokeWidth={1.3} /></div>
        <div className="w-[24px] flex items-center justify-center shrink-0"><OneDrive s={17} /></div>
        <div className="w-[25px] flex items-center justify-center shrink-0"><Battery /></div>
        <div className="w-[24px] flex items-center justify-center shrink-0"><Net s={16} /></div>
        <div className="w-[23px] flex items-center justify-center shrink-0"><Volume2 size={17} strokeWidth={1} /></div>
        <div className="w-[36px] flex items-center justify-center text-[12px] text-[#f0f0f0] shrink-0">ENG</div>
        <div className="w-[72px] flex flex-col items-center justify-center pt-[2px] text-[11.7px] leading-[19px] text-[#f0f0f0] shrink-0"><span>22:01</span><span>24-11-2022</span></div>
        <div className="w-[38px] flex items-center justify-center shrink-0"><Bubble s={16} /></div>
        <div className="flex-1 flex justify-end"><span className="w-px bg-[#4e5b66]" /></div>
      </div>
    </div>
  );
}
